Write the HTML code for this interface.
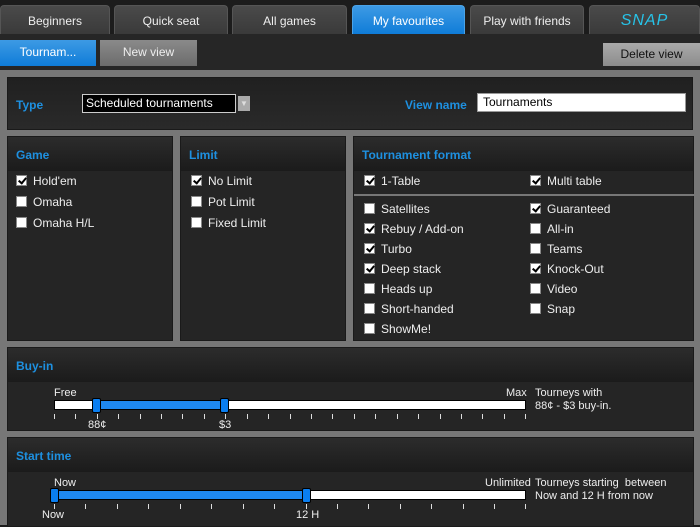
<!DOCTYPE html>
<html><head><style>
*{margin:0;padding:0;box-sizing:border-box}
body{width:700px;height:525px;background:#1c1c1c;font-family:"Liberation Sans",sans-serif;font-size:12px;color:#fff;position:relative;overflow:hidden}
.a{position:absolute}
.tab{position:absolute;top:5px;height:29px;border-radius:4px 4px 0 0;background:linear-gradient(#4a4a4a,#3a3a3a);border:1px solid #555;border-bottom:none;text-align:center;line-height:30px;color:#eee}
.tab.on{background:linear-gradient(#3d9ae4,#0f7cd8);color:#fff;border-color:#4aa3e8}
.btn{position:absolute;text-align:center;line-height:24px;height:26px}
.panel{position:absolute;background:#252525;border:1px solid #1a1a1a}
.hd{height:34px;background:linear-gradient(#2c2c2c,#1b1b1b);color:#1e90e0;font-weight:bold;padding-left:8px;line-height:37px;font-size:12px}
.cb{position:absolute;font-size:12px;color:#eee;line-height:14px}
.cb i{display:inline-block;width:11px;height:11px;background:#fff;border:1px solid #888;vertical-align:-1px;margin-right:6px;position:relative;font-style:normal}
.cb i.c::after{content:"";position:absolute;left:3px;top:0px;width:3px;height:6px;border:solid #000;border-width:0 2px 2px 0;transform:rotate(40deg)}
.trk{position:absolute;height:10px;background:#fff;border:1px solid #000}
.fill{position:absolute;height:8px;background:#1e88f0;top:0}
.hdl{position:absolute;width:9px;height:15px;background:#0a7ef0;border:1px solid #000;border-radius:2px}
.tk{position:absolute;width:1px;height:5px;background:#ddd}
.lb{position:absolute;color:#eee;font-size:11px}
</style></head><body>
<div class="tab" style="left:0;width:110px">Beginners</div>
<div class="tab" style="left:114px;width:114px">Quick seat</div>
<div class="tab" style="left:232px;width:115px">All games</div>
<div class="tab on" style="left:352px;width:113px">My favourites</div>
<div class="tab" style="left:470px;width:114px">Play with friends</div>
<div class="tab" style="left:589px;width:111px;color:#27c3e8;font-style:italic;font-size:16px;letter-spacing:1px">SNAP</div>
<div class="a" style="left:0;top:34px;width:700px;height:36px;background:#262626"></div>
<div class="btn" style="left:0;top:40px;width:96px;background:linear-gradient(#3d9ae4,#0f7cd8)">Tournam...</div>
<div class="btn" style="left:100px;top:40px;width:97px;background:linear-gradient(#8a8a8a,#6c6c6c);color:#eee">New view</div>
<div class="btn" style="left:603px;top:43px;width:97px;height:23px;line-height:22px;background:linear-gradient(#aaa,#8c8c8c);color:#111">Delete view</div>
<div class="a" style="left:0;top:70px;width:700px;height:455px;background:#777"></div>

<div class="panel" style="left:7px;top:77px;width:686px;height:53px;background:linear-gradient(#202020,#2a2a2a)">
<div class="a" style="left:8px;top:20px;color:#1e90e0;font-weight:bold">Type</div>
<div class="a" style="left:74px;top:16px;width:154px;height:19px;background:#000;border:1px solid #ccc;padding-left:3px;line-height:17px">Scheduled tournaments</div>
<div class="a" style="left:230px;top:18px;width:12px;height:15px;background:#aaa;color:#ddd;font-size:8px;text-align:center;line-height:15px">▼</div>
<div class="a" style="left:397px;top:20px;color:#1e90e0;font-weight:bold">View name</div>
<div class="a" style="left:469px;top:15px;width:209px;height:19px;background:#fff;color:#000;border:1px solid #999;padding-left:5px;line-height:17px">Tournaments</div>
</div>

<div class="panel" style="left:7px;top:136px;width:166px;height:205px"><div class="hd">Game</div>
<div class="cb" style="left:8px;top:37px"><i class="c"></i>Hold'em</div>
<div class="cb" style="left:8px;top:58px"><i></i>Omaha</div>
<div class="cb" style="left:8px;top:79px"><i></i>Omaha H/L</div></div>

<div class="panel" style="left:180px;top:136px;width:166px;height:205px"><div class="hd">Limit</div>
<div class="cb" style="left:10px;top:37px"><i class="c"></i>No Limit</div>
<div class="cb" style="left:10px;top:58px"><i></i>Pot Limit</div>
<div class="cb" style="left:10px;top:79px"><i></i>Fixed Limit</div></div>

<div class="panel" style="left:353px;top:136px;width:341px;height:205px"><div class="hd">Tournament format</div>
<div class="cb" style="left:10px;top:37px"><i class="c"></i>1-Table</div>
<div class="cb" style="left:176px;top:37px"><i class="c"></i>Multi table</div>
<div class="a" style="left:0;top:57px;width:341px;height:2px;background:#777"></div>
<div class="cb" style="left:10px;top:65px"><i></i>Satellites</div>
<div class="cb" style="left:10px;top:85px"><i class="c"></i>Rebuy / Add-on</div>
<div class="cb" style="left:10px;top:105px"><i class="c"></i>Turbo</div>
<div class="cb" style="left:10px;top:125px"><i class="c"></i>Deep stack</div>
<div class="cb" style="left:10px;top:145px"><i></i>Heads up</div>
<div class="cb" style="left:10px;top:165px"><i></i>Short-handed</div>
<div class="cb" style="left:10px;top:185px"><i></i>ShowMe!</div>
<div class="cb" style="left:176px;top:65px"><i class="c"></i>Guaranteed</div>
<div class="cb" style="left:176px;top:85px"><i></i>All-in</div>
<div class="cb" style="left:176px;top:105px"><i></i>Teams</div>
<div class="cb" style="left:176px;top:125px"><i class="c"></i>Knock-Out</div>
<div class="cb" style="left:176px;top:145px"><i></i>Video</div>
<div class="cb" style="left:176px;top:165px"><i></i>Snap</div></div>

<div class="panel" style="left:7px;top:347px;width:687px;height:84px"><div class="hd">Buy-in</div></div>
<div class="lb" style="left:54px;top:387px">Free</div>
<div class="lb" style="left:506px;top:387px">Max</div>
<div class="lb" style="left:535px;top:387px;line-height:13px">Tourneys with<br>88¢ - $3 buy-in.</div>
<div class="trk" style="left:54px;top:400px;width:472px"><div class="fill" style="left:43px;width:128px"></div></div>
<div class="hdl" style="left:92px;top:398px"></div>
<div class="hdl" style="left:220px;top:398px"></div>
<div class="lb" style="left:88px;top:419px">88¢</div>
<div class="lb" style="left:219px;top:419px">$3</div>

<div class="panel" style="left:7px;top:437px;width:687px;height:90px"><div class="hd">Start time</div></div>
<div class="lb" style="left:54px;top:477px">Now</div>
<div class="lb" style="left:485px;top:477px">Unlimited</div>
<div class="lb" style="left:535px;top:477px;line-height:13px">Tourneys starting &nbsp;between<br>Now and 12 H from now</div>
<div class="trk" style="left:54px;top:490px;width:472px"><div class="fill" style="left:0;width:252px"></div></div>
<div class="hdl" style="left:50px;top:488px"></div>
<div class="hdl" style="left:302px;top:488px"></div>
<div class="lb" style="left:42px;top:509px">Now</div>
<div class="lb" style="left:296px;top:509px">12 H</div>

<div class="tk" style="left:54px;top:414px"></div><div class="tk" style="left:75px;top:414px"></div><div class="tk" style="left:97px;top:414px"></div><div class="tk" style="left:118px;top:414px"></div><div class="tk" style="left:140px;top:414px"></div><div class="tk" style="left:161px;top:414px"></div><div class="tk" style="left:182px;top:414px"></div><div class="tk" style="left:204px;top:414px"></div><div class="tk" style="left:225px;top:414px"></div><div class="tk" style="left:247px;top:414px"></div><div class="tk" style="left:268px;top:414px"></div><div class="tk" style="left:290px;top:414px"></div><div class="tk" style="left:311px;top:414px"></div><div class="tk" style="left:332px;top:414px"></div><div class="tk" style="left:354px;top:414px"></div><div class="tk" style="left:375px;top:414px"></div><div class="tk" style="left:397px;top:414px"></div><div class="tk" style="left:418px;top:414px"></div><div class="tk" style="left:440px;top:414px"></div><div class="tk" style="left:461px;top:414px"></div><div class="tk" style="left:482px;top:414px"></div><div class="tk" style="left:504px;top:414px"></div><div class="tk" style="left:525px;top:414px"></div>
<div class="tk" style="left:54px;top:504px"></div><div class="tk" style="left:85px;top:504px"></div><div class="tk" style="left:117px;top:504px"></div><div class="tk" style="left:148px;top:504px"></div><div class="tk" style="left:180px;top:504px"></div><div class="tk" style="left:211px;top:504px"></div><div class="tk" style="left:243px;top:504px"></div><div class="tk" style="left:274px;top:504px"></div><div class="tk" style="left:306px;top:504px"></div><div class="tk" style="left:337px;top:504px"></div><div class="tk" style="left:368px;top:504px"></div><div class="tk" style="left:400px;top:504px"></div><div class="tk" style="left:431px;top:504px"></div><div class="tk" style="left:463px;top:504px"></div><div class="tk" style="left:494px;top:504px"></div><div class="tk" style="left:525px;top:504px"></div>
</body></html>
